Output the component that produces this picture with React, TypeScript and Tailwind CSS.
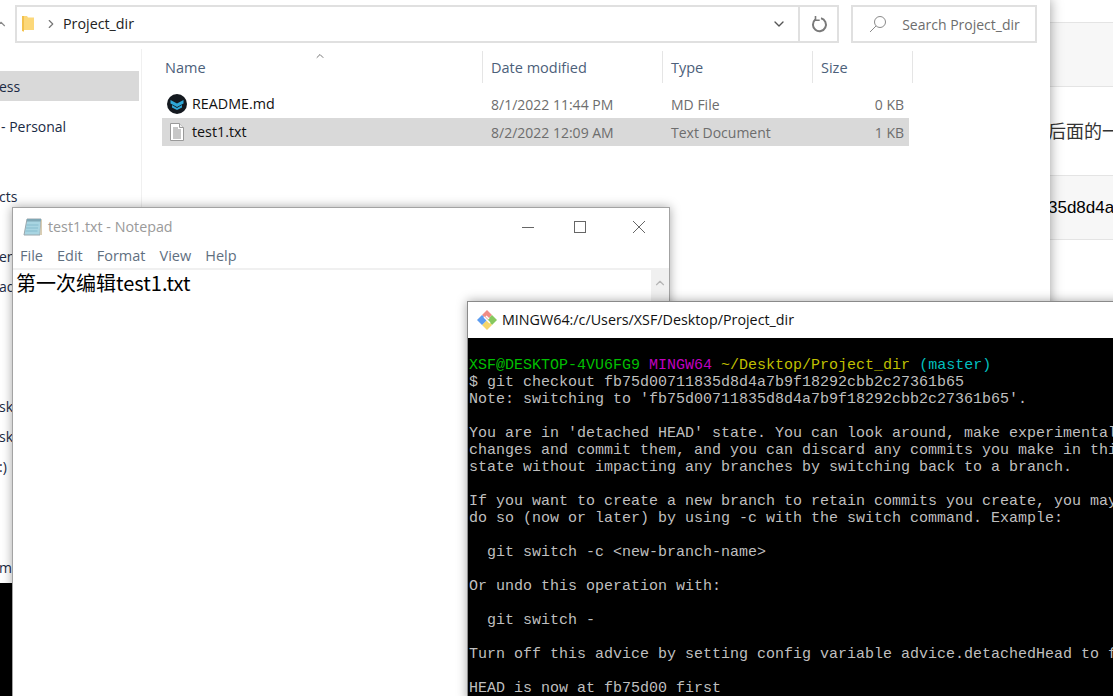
import { ChevronDown, ChevronRight, ChevronUp } from 'lucide-react';

const UI_FONT = "font-['Open_Sans','Noto_Sans_CJK_SC',sans-serif]";

const sideItems = [
    { label: 'ess', top: 'h-[30px] mt-[22px] bg-[#d9d9d9]' },
    { label: '- Personal', top: 'h-[30px] mt-[10px] pl-[2px]' },
    { label: 'cts', top: 'h-[30px] mt-[40px]' },
    { label: 'ent', top: 'h-[30px] mt-[30px]' },
    { label: 'ad', top: 'h-[30px]' },
    { label: 'sk', top: 'h-[30px] mt-[90px]' },
    { label: 'sk', top: 'h-[30px]' },
    { label: ':)', top: 'h-[30px]' },
    { label: 'm', top: 'h-[30px] mt-[71px]' },
];

const files = [
    { name: 'README.md', date: '8/1/2022 11:44 PM', type: 'MD File', size: '0 KB', selected: false },
    { name: 'test1.txt', date: '8/2/2022 12:09 AM', type: 'Text Document', size: '1 KB', selected: true },
];

const termLines = [
    '$ git checkout fb75d00711835d8d4a7b9f18292cbb2c27361b65',
    "Note: switching to 'fb75d00711835d8d4a7b9f18292cbb2c27361b65'.",
    ' ',
    "You are in 'detached HEAD' state. You can look around, make experimental",
    'changes and commit them, and you can discard any commits you make in this',
    'state without impacting any branches by switching back to a branch.',
    ' ',
    'If you want to create a new branch to retain commits you create, you may',
    'do so (now or later) by using -c with the switch command. Example:',
    ' ',
    '  git switch -c <new-branch-name>',
    ' ',
    'Or undo this operation with:',
    ' ',
    '  git switch -',
    ' ',
    'Turn off this advice by setting config variable advice.detachedHead to false',
    ' ',
    'HEAD is now at fb75d00 first',
];

const FolderIcon = () => (
    <svg width="14" height="18" viewBox="0 0 14 18">
        <path d="M1 1h5l1 1.5h6V15H3v2l-2-1z" fill="#fcd87a" />
        <path d="M1 1h2v15l-2 0z" fill="#f2c14e" />
    </svg>
);

const MarkdownIcon = () => (
    <svg width="20" height="20" viewBox="0 0 20 20">
        <circle cx="10" cy="10" r="10" fill="#14191f" />
        <path d="M3.500 6l6.500 3.500L16.500 6v3.500L10 13 3.500 9.500z" fill="#2fa8d8" />
        <path d="M5 11l5 3 5-3v2.500l-5 2.500-5-2.500z" fill="#2fa8d8" />
    </svg>
);

const TextFileIcon = () => (
    <svg width="16" height="20" viewBox="0 0 16 20">
        <path d="M1.500 1.500h9l4 4v13h-13z" fill="#fff" stroke="#9a9a9a" />
        <path d="M10.500 1.500v4h4" fill="#eee" stroke="#9a9a9a" />
        <path d="M4 6h5M4 8h8M4 10h8M4 12h8M4 14h8M4 16h8" stroke="#8f8f8f" />
    </svg>
);

const NotepadIcon = () => (
    <svg width="20" height="20" viewBox="0 0 20 20">
        <path d="M4 2h14l-1 16H1z" fill="#a8d5e2" stroke="#9aa7ad" />
        <path d="M4 2h14v2.500H4z" fill="#7fa7b5" />
        <path d="M3.500 8h12M3 11h12M2.500 14h12" stroke="#86bccd" />
        <path d="M17 18l1-15h1v15z" fill="#d9cdb3" />
    </svg>
);

const GitIcon = () => (
    <svg width="22" height="22" viewBox="0 0 22 22">
        <path d="M11 1l5 5-5 5-5-5z" fill="#f08d85" />
        <path d="M16 6l5 5-5 5-5-5z" fill="#86c85e" />
        <path d="M11 11l5 5-5 5-5-5z" fill="#f6d66a" />
        <path d="M6 6l5 5-5 5-5-5z" fill="#5c9cf0" />
        <path d="M8 8l6 6M10 7l3 3" stroke="#fff" strokeWidth="1.500" />
    </svg>
);

const SearchIcon = () => (
    <svg width="18" height="18" viewBox="0 0 18 18" fill="none" stroke="#8a8a8a">
        <circle cx="11" cy="7" r="5.500" />
        <path d="M7 11l-6 6" />
    </svg>
);

const RefreshIcon = () => (
    <svg width="18" height="18" viewBox="0 0 18 18" fill="none" stroke="#7a7a7a" strokeWidth="2">
        <path d="M11 3.300A6.500 6.500 0 1 1 5.300 4.600" />
        <path d="M5.500 1v4.200h4.200" strokeWidth="1.600" />
    </svg>
);

const App = () => {
    return (
        <div className={`relative w-[1113px] h-[696px] overflow-hidden bg-white ${UI_FONT}`}>
            {/* page behind the windows */}
            <div className="h-full flex flex-col items-end">
                <div className="w-[65px] h-[65px] mt-[22px] bg-[#f7f7f7] border-y border-[#e4e4e4]" />
                <div className="w-[65px] h-[88px] flex items-center overflow-hidden whitespace-nowrap text-[18px] text-[#333]">
                    后面的一
                </div>
                <div className="w-[65px] h-[65px] flex items-center overflow-hidden whitespace-nowrap bg-[#f7f7f7] border-y border-[#e4e4e4] text-[17px] text-black font-['Liberation_Sans',sans-serif]">
                    35d8d4a
                </div>
            </div>

            {/* desktop */}
            <div className="absolute left-0 top-[582px] w-[14px] h-[114px] bg-black" />

            {/* explorer */}
            <div className="absolute left-[-1px] top-[-1px] w-[1051px] h-[584px] bg-white shadow-[0_0_12px_rgba(0,0,0,0.4)] flex flex-col">
                <div className="h-[50px] pt-[6px] flex items-start pr-[13px]">
                    <ChevronUp className="w-[14px] h-[14px] mt-[12px] -ml-[5px] text-[#8a8a8a]" />
                    <div className="ml-[7px] w-[825px] h-[38px] border-2 border-[#e0e0e0] flex items-center">
                        <div className="ml-[4px]">
                            <FolderIcon />
                        </div>
                        <ChevronRight className="w-[14px] h-[14px] ml-[9px] text-[#777]" />
                        <span className="ml-[5px] text-[14.300px] text-[#222]">Project_dir</span>
                        <div className="flex-1" />
                        <ChevronDown className="w-[16px] h-[16px] mr-[11px] text-[#555]" />
                        <div className="w-[39px] h-full border-l-2 border-[#e0e0e0] flex items-center justify-center">
                            <RefreshIcon />
                        </div>
                    </div>
                    <div className="ml-[12px] w-[186px] h-[38px] border-2 border-[#e0e0e0] flex items-center text-[14px] text-[#6d6d6d]">
                        <div className="ml-[16px] mr-[15px]">
                            <SearchIcon />
                        </div>
                        Search Project_dir
                    </div>
                </div>
                <div className="flex-1 flex">
                    <div className="w-[143px] border-r border-[#f0f0f0] flex flex-col text-[14px] text-[#1a2a44]">
                        {sideItems.map((item, i) => (
                            <div key={i} className={`${item.top} w-[140px] flex items-center whitespace-nowrap`}>
                                {item.label}
                            </div>
                        ))}
                    </div>
                    <div className="flex-1 pl-[20px] text-[14px]">
                        <div className="flex h-[32px] mt-[2px] text-[14.500px] text-[#4c607a]">
                            {[
                                { label: 'Name', cls: 'w-[321px] pl-[3px] relative' },
                                { label: 'Date modified', cls: 'w-[180px] pl-[8px]' },
                                { label: 'Type', cls: 'w-[150px] pl-[8px]' },
                                { label: 'Size', cls: 'w-[100px] pl-[8px]' },
                            ].map((col) => (
                                <div
                                    key={col.label}
                                    className={`${col.cls} flex items-center pt-[2px] border-r border-[#e5e5e5]`}
                                >
                                    {col.label}
                                    {col.label === 'Name' && (
                                        <ChevronUp className="absolute left-[151px] top-[-1px] w-[14px] h-[12px] text-[#777]" />
                                    )}
                                </div>
                            ))}
                        </div>
                        <div className="mt-[7px] w-[747px] flex flex-col">
                            {files.map((file) => (
                                <div
                                    key={file.name}
                                    className={`grid grid-cols-[321px_180px_150px_96px] h-[28px] items-center ${file.selected ? 'bg-[#d9d9d9]' : ''}`}
                                >
                                    <div className="flex items-center text-[14.300px] text-[#111]">
                                        <div className="w-[30px] flex justify-center">
                                            {file.selected ? <TextFileIcon /> : <MarkdownIcon />}
                                        </div>
                                        {file.name}
                                    </div>
                                    <div className="pl-[8px] text-[#6d6d6d]">{file.date}</div>
                                    <div className="pl-[8px] text-[#6d6d6d]">{file.type}</div>
                                    <div className="pr-[5px] text-right text-[#6d6d6d]">{file.size}</div>
                                </div>
                            ))}
                        </div>
                    </div>
                </div>
            </div>

            {/* notepad */}
            <div className="absolute left-[12px] top-[207px] w-[658px] h-[500px] bg-white border border-[#a3a3a3] shadow-[0_0_10px_rgba(0,0,0,0.35)] flex flex-col">
                <div className="h-[36px] pt-[2px] flex items-center text-[14.300px] text-[#9a9a9a]">
                    <div className="ml-[10px] mr-[5px]">
                        <NotepadIcon />
                    </div>
                    test1.txt - Notepad
                    <div className="flex-1" />
                    <div className="w-[12px] h-px bg-[#666]" />
                    <div className="ml-[40px] w-[12px] h-[12px] border border-[#666]" />
                    <svg width="14" height="14" viewBox="0 0 14 14" className="ml-[46px] mr-[23px]" stroke="#666">
                        <path d="M1 1l12 12M13 1L1 13" />
                    </svg>
                </div>
                <div className="h-[26px] flex items-center gap-[14px] pl-[7px] text-[14.500px] text-[#5f6f7f] border-b-2 border-[#f0f0f0]">
                    <span>File</span>
                    <span>Edit</span>
                    <span>Format</span>
                    <span>View</span>
                    <span>Help</span>
                </div>
                <div className="flex-1 flex">
                    <div className="flex-1 pl-[3px] text-[20px] leading-[26px] text-black font-['Noto_Sans_CJK_SC',sans-serif]">
                        第一次编辑test1.txt
                    </div>
                    <div className="w-[18px] bg-[#f0f0f0] flex justify-center pt-[6px]">
                        <ChevronUp className="w-[14px] h-[14px] text-[#b5b5b5]" />
                    </div>
                </div>
            </div>

            {/* git bash */}
            <div className="absolute left-[467px] top-[301px] w-[660px] h-[400px] bg-black border border-[#8a8a8a] shadow-[0_0_10px_rgba(0,0,0,0.35)] flex flex-col">
                <div className="h-[36px] bg-white flex items-center text-[14.300px] text-[#111]">
                    <div className="ml-[8px] mr-[4px]">
                        <GitIcon />
                    </div>
                    MINGW64:/c/Users/XSF/Desktop/Project_dir
                    <div className="ml-[349px] w-[12px] h-px bg-[#333]" />
                </div>
                <div className="pt-[19px] pl-px text-[15px] leading-[17px] whitespace-pre text-[#bfbfbf] font-['Liberation_Mono',monospace]">
                    <div>
                        <span className="text-[#00bf00]">XSF@DESKTOP-4VU6FG9</span>{' '}
                        <span className="text-[#bf00bf]">MINGW64</span>{' '}
                        <span className="text-[#bfbf00]">~/Desktop/Project_dir</span>{' '}
                        <span className="text-[#00bfbf]">(master)</span>
                    </div>
                    {termLines.map((line, i) => (
                        <div key={i}>{line}</div>
                    ))}
                </div>
            </div>
        </div>
    );
};

export default App;
